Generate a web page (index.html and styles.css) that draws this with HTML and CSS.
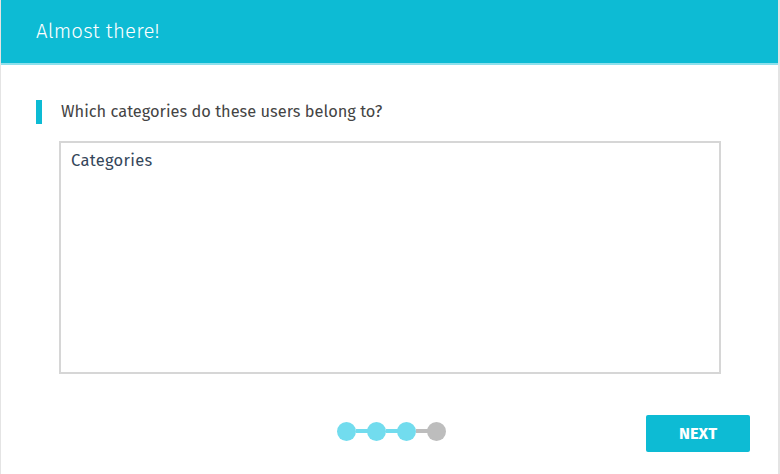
FILE: index.html
```html
<!DOCTYPE html>
<html>
<head>
<meta charset="utf-8">
<link rel="stylesheet" href="styles.css">
</head>
<body>
<div class="frame">
  <header class="header"><h1 class="title">Almost there!</h1></header>
  <main class="content">
    <div class="question"><span class="accent"></span><span class="qtext">Which categories do these users belong to?</span></div>
    <textarea class="answer" placeholder="Categories"></textarea>
    <div class="footer">
      <div class="steps">
        <span class="dot on"></span><span class="bar on"></span>
        <span class="dot on"></span><span class="bar on"></span>
        <span class="dot on"></span><span class="bar"></span>
        <span class="dot"></span>
      </div>
      <button class="next">NEXT</button>
    </div>
  </main>
</div>
</body>
</html>
```
FILE: styles.css
```css
html, body { margin: 0; padding: 0; }
body { width: 780px; height: 474px; font-family: "Fira Sans", "Open Sans", "Liberation Sans", sans-serif; background: #fff; }
.frame { box-sizing: border-box; width: 780px; height: 474px; border-left: 1px solid #e4e4e4; border-right: 2px solid #e4e4e4; display: flex; flex-direction: column; }
.header { height: 63px; background: #0dbbd4; border-bottom: 2px solid #8ee0ec; display: flex; align-items: center; padding-left: 35px; }
.title { margin: 0; font-weight: 300; font-size: 20.4px; color: #fff; letter-spacing: 0.2px; position: relative; top: -1px; }
.content { padding: 35px 0 0 35px; flex: 1; display: flex; flex-direction: column; }
.question { display: flex; align-items: center; height: 24px; }
.accent { width: 6px; height: 24px; background: #0dbbd4; margin-right: 19px; }
.qtext { font-size: 16.4px; font-weight: 400; color: #444; position: relative; top: -1px; }
.answer { margin: 17px 0 0 23px; width: 662px; height: 233px; box-sizing: border-box; border: 2px solid #d6d6d6; resize: none; padding: 8px 10px; font-family: inherit; font-size: 16.5px; letter-spacing: 0.3px; outline: none; }
.answer::placeholder { color: #34465a; opacity: 1; }
.footer { display: flex; align-items: center; margin-top: 40px; height: 38px; }
.steps { display: flex; align-items: center; margin-left: 301px; position: relative; top: -2px; }
.dot { width: 19px; height: 19px; border-radius: 50%; background: #bdbdbd; }
.dot.on { background: #72dcee; }
.bar { width: 12px; height: 4px; background: #bdbdbd; margin: 0 -0.5px; }
.bar.on { background: #72dcee; }
.next { margin-left: 200px; width: 104px; height: 37px; border: none; border-radius: 2px; background: #0dbbd4; color: #fff; font-family: inherit; font-weight: 700; font-size: 16.5px; padding: 0; }
```
